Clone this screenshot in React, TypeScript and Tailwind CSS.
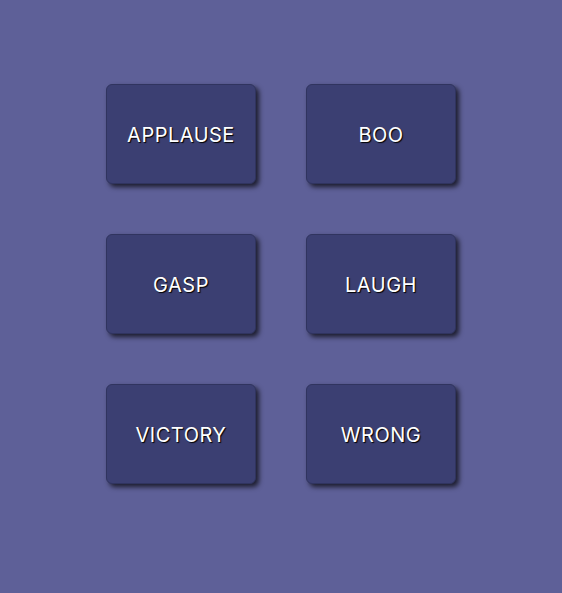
const SOUNDS = ['APPLAUSE', 'BOO', 'GASP', 'LAUGH', 'VICTORY', 'WRONG'];

export default function App() {
  return (
    <div className="min-h-[593px] bg-[#5e6098] pt-[84px]">
      <div className="mx-auto grid w-[350px] grid-cols-2 gap-[50px]">
        {SOUNDS.map((s) => (
          <button
            key={s}
            type="button"
            className="flex h-[100px] w-[150px] items-center justify-center rounded-[6px] border border-[#30345f] bg-[#3b3f72] pt-[2px] text-[20px] tracking-[0.5px] text-white shadow-[3px_3px_5px_rgba(0,0,0,0.7)] [font-family:Inter,'Noto_Sans',sans-serif] [text-shadow:1px_1px_1px_#000]"
          >
            {s}
          </button>
        ))}
      </div>
    </div>
  );
}
